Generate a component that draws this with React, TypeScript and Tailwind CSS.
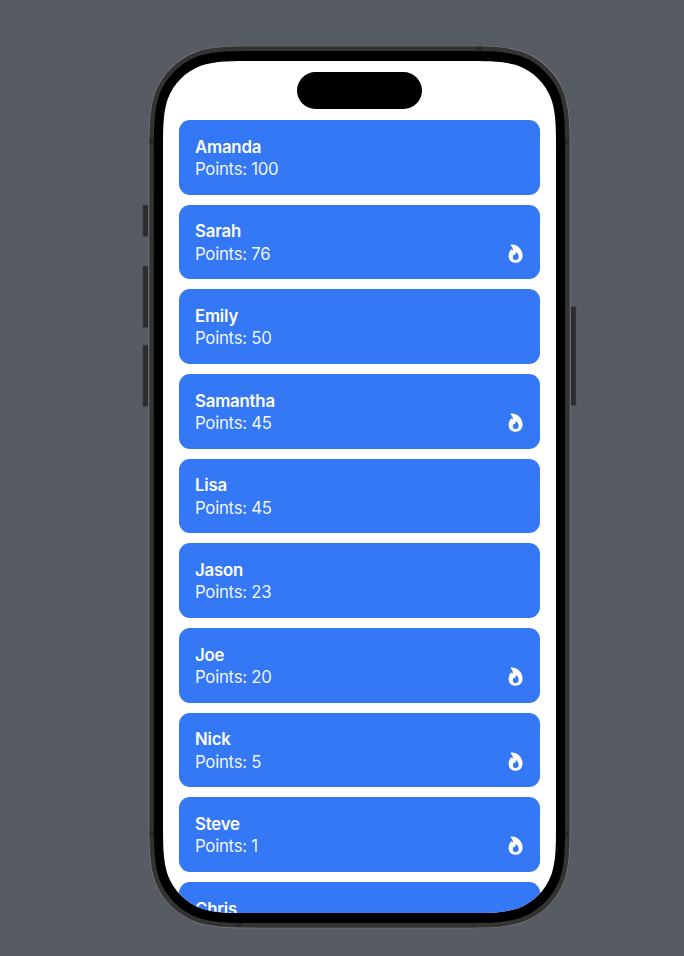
type Player = { name: string; points?: number; streak?: boolean };

const players: Player[] = [
  { name: "Amanda", points: 100 },
  { name: "Sarah", points: 76, streak: true },
  { name: "Emily", points: 50 },
  { name: "Samantha", points: 45, streak: true },
  { name: "Lisa", points: 45 },
  { name: "Jason", points: 23 },
  { name: "Joe", points: 20, streak: true },
  { name: "Nick", points: 5, streak: true },
  { name: "Steve", points: 1, streak: true },
  { name: "Chris" },
];

// Rectangle with continuous-curvature corners, as on the device hardware.
function smoothRect(x: number, y: number, w: number, h: number, r: number) {
  const a = 1.52866 * r;
  const b = 1.08849 * r;
  const c = 0.86841 * r;
  const d = 0.63149 * r;
  const e = 0.07491 * r;
  const f = 0.37282 * r;
  const g = 0.16906 * r;
  const R = x + w;
  const B = y + h;
  return [
    `M${x + a} ${y}L${R - a} ${y}`,
    `C${R - b} ${y} ${R - c} ${y} ${R - d} ${y + e}`,
    `C${R - f} ${y + g} ${R - g} ${y + f} ${R - e} ${y + d}`,
    `C${R} ${y + c} ${R} ${y + b} ${R} ${y + a}`,
    `L${R} ${B - a}`,
    `C${R} ${B - b} ${R} ${B - c} ${R - e} ${B - d}`,
    `C${R - g} ${B - f} ${R - f} ${B - g} ${R - d} ${B - e}`,
    `C${R - c} ${B} ${R - b} ${B} ${R - a} ${B}`,
    `L${x + a} ${B}`,
    `C${x + b} ${B} ${x + c} ${B} ${x + d} ${B - e}`,
    `C${x + f} ${B - g} ${x + g} ${B - f} ${x + e} ${B - d}`,
    `C${x} ${B - c} ${x} ${B - b} ${x} ${B - a}`,
    `L${x} ${y + a}`,
    `C${x} ${y + b} ${x} ${y + c} ${x + e} ${y + d}`,
    `C${x + g} ${y + f} ${x + f} ${y + g} ${x + d} ${y + e}`,
    `C${x + c} ${y} ${x + b} ${y} ${x + a} ${y}Z`,
  ].join("");
}

function Flame() {
  return (
    <svg viewBox="-0.6 -0.4 15 19" className="h-[19px] w-[15px] fill-white" aria-hidden="true">
      <path
        fillRule="evenodd"
        d="M2.1.5C2.3.1 2.8 0 3.3 0C9.4.2 14 5.2 14 11.2C14 15.4 11.2 18.4 7.1 18.4C2.9 18.4 0 15.6 0 11.6C0 8.5 1.3 6.2 2.3 5.3C2.8 4.9 3.3 5.1 3.5 5.6C3.6 5.9 3.8 6.2 4.1 6.4C4.6 4.5 3.8 2.8 2.3 1.4C2 1.1 1.9.8 2.1.5ZM7.2 7.6C7.4 9.2 6.7 10 6 10.9C5.6 10.7 5.4 10.4 5.2 10C4.6 10.8 4.2 11.8 4.2 12.8C4.2 14.6 5.3 15.7 7.1 15.7C8.9 15.7 10.1 14.5 10.1 12.7C10.1 10.4 8.9 8.4 7.2 7.6Z"
      />
    </svg>
  );
}

function DeviceFrame() {
  return (
    <svg viewBox="0 0 436 884" className="absolute top-0 -left-[7px] h-[884px] w-[436px]" aria-hidden="true">
      <g fill="#2b2c2e" stroke="#4b4e52" strokeWidth="0.6">
        <rect x="1.8" y="160" width="6" height="31.5" rx="0.6" />
        <rect x="1.8" y="221" width="6" height="61.5" rx="0.6" />
        <rect x="1.8" y="300" width="6" height="61.5" rx="0.6" />
        <rect x="429" y="261.5" width="6" height="99" rx="0.6" />
      </g>
      <path d={smoothRect(7, 0, 423, 884, 76)} fill="#505256" />
      <path d={smoothRect(7.4, 0.4, 422.2, 883.2, 75.6)} fill="#77787a" />
      <path d={smoothRect(8.3, 1.3, 420.4, 881.4, 74.7)} fill="#333334" />
      <g fill="#28282a">
        <rect x="336" y="1.5" width="5" height="5" />
        <rect x="96" y="877" width="5" height="5" />
        <rect x="8.5" y="93" width="5" height="6" />
        <rect x="423" y="93" width="5" height="6" />
        <rect x="8.5" y="786" width="5" height="6" />
        <rect x="423" y="786" width="5" height="6" />
      </g>
      <path d={smoothRect(12.9, 6, 411.2, 872, 70)} fill="#000" />
    </svg>
  );
}

function PlayerCard({ name, points, streak }: Player) {
  return (
    <li className="flex h-[74.67px] shrink-0 justify-between rounded-[11px] bg-[#3478f6] px-4 pt-[16.6px] text-[16.8px] leading-[20.33px] text-white">
      <div className="flex flex-col gap-[2px]">
        <span className="font-semibold tracking-[-0.2px]">{name}</span>
        {points !== undefined && (
          <span className="tracking-[-0.27px] text-white/95">Points: {points}</span>
        )}
      </div>
      {streak && (
        <div className="mr-[1px] self-end pb-[16.5px]">
          <Flame />
        </div>
      )}
    </li>
  );
}

export default function App() {
  return (
    <main className="flex h-[956px] w-[684px] overflow-hidden bg-[#575c64] pt-[45px] pl-[148px] font-['Inter','Liberation_Sans',sans-serif]">
      <div className="relative h-[884px] w-[423px] pt-4 pl-[15px]">
        <DeviceFrame />
        <div
          className="relative flex h-[852px] w-[393px] flex-col overflow-hidden bg-white"
          style={{ clipPath: `path("${smoothRect(0, 0, 393, 852, 61)}")` }}
        >
          <header className="flex h-[59px] shrink-0 justify-center pt-[11.3px]">
            <div className="h-[36.7px] w-[125px] rounded-full bg-black" />
          </header>
          <ul className="flex flex-col gap-[10px] px-4">
            {players.map((player) => (
              <PlayerCard key={player.name} {...player} />
            ))}
          </ul>
        </div>
      </div>
    </main>
  );
}
